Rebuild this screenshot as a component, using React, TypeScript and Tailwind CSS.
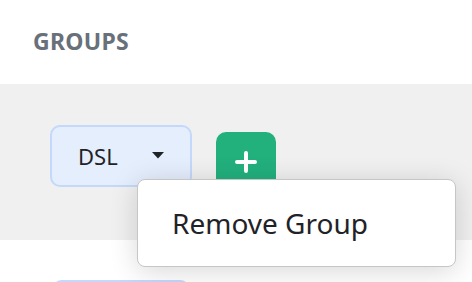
import React from "react";

export default function App() {
  return (
    <div className="w-[472px] h-[282px] overflow-hidden bg-white relative" style={{ fontFamily: '"Noto Sans", sans-serif' }}>
      <div className="h-[84px] pl-[33px] pt-[25px]">
        <span className="text-[23px] leading-[32px] font-bold tracking-[0.3px] text-[#68707a]">GROUPS</span>
      </div>
      <div className="h-[156px] bg-[#f0f0f0] flex items-start pl-[50px] pt-[41px] gap-[24px]">
        <div className="relative">
          <button className="w-[142px] h-[62px] rounded-[10px] border-2 border-[#c3d8fb] bg-[#e5eefd] flex items-center pl-[26px] pr-[25px] justify-between">
            <span className="text-[22px] text-[#1f2328]">DSL</span>
            <svg width="14" height="7" viewBox="0 0 14 7" className="mt-[-2px]"><path d="M1 0h12L7 6.5z" fill="#1f2328" /></svg>
          </button>
          <div className="absolute z-10 left-[87px] top-[54px] w-[319px] h-[88px] bg-white border border-[#c6c6c6] rounded-[8px] shadow-[0_4px_28px_rgba(0,0,0,0.16)] flex items-center pl-[34px]">
            <span className="text-[28px] text-[#1f2328]">Remove Group</span>
          </div>
        </div>
        <button className="mt-[7px] w-[60px] h-[60px] rounded-[10px] bg-[#22b07d] flex items-center justify-center">
          <svg width="22" height="22" viewBox="0 0 22 22"><path d="M11 2v18M2 11h18" stroke="white" strokeWidth="4" strokeLinecap="round" /></svg>
        </button>
      </div>
      <div className="pt-[40px] pl-[52px]">
        <div className="w-[138px] h-[62px] rounded-[10px] border-2 border-[#c3d8fb] bg-[#e5eefd]" />
      </div>
    </div>
  );
}
